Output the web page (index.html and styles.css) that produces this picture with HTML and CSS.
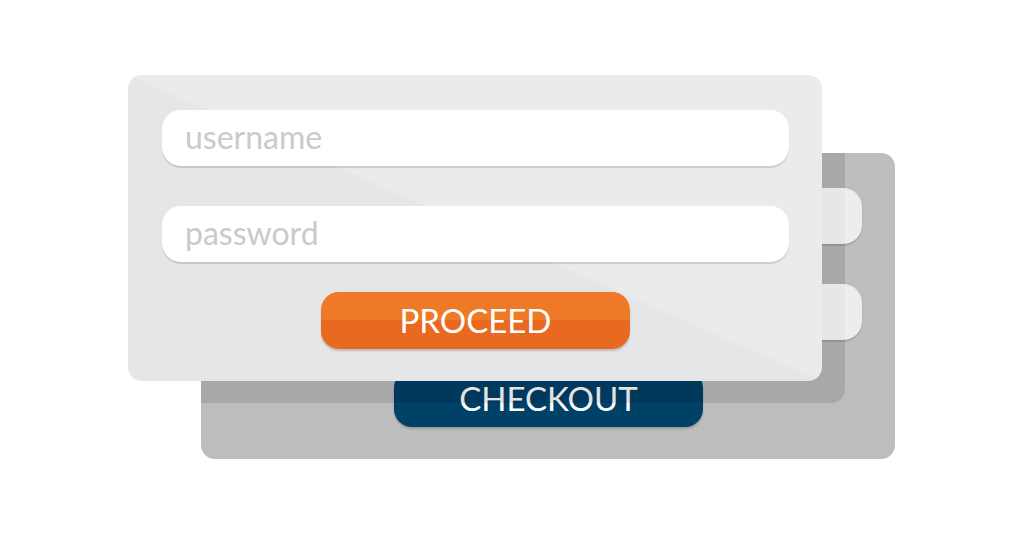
FILE: index.html
```html
<!DOCTYPE html>
<html lang="en">
<head>
<meta charset="utf-8">
<title>Login</title>
<link rel="stylesheet" href="styles.css">
</head>
<body>
<div class="stage">
  <div class="card card-back">
    <div class="field field-back"></div>
    <div class="field field-back"></div>
    <div class="btn btn-checkout">CHECKOUT</div>
  </div>
  <div class="card card-front">
    <div class="field"><span class="ph">username</span></div>
    <div class="field"><span class="ph">password</span></div>
    <div class="btn btn-proceed">PROCEED</div>
  </div>
</div>
</body>
</html>
```

FILE: styles.css
```css
* { box-sizing: border-box; }
html, body {
  margin: 0;
  background: #ffffff;
  font-family: Lato, "Liberation Sans", sans-serif;
}
.stage {
  display: grid;
  padding: 75px 0 0 128px;
  width: 1024px;
  height: 535px;
}
.card {
  grid-area: 1 / 1;
  width: 694px;
  height: 306px;
  border-radius: 14px;
  display: flex;
  flex-direction: column;
  align-items: center;
  padding: 35px 33px 0 34px;
}
.card-back {
  margin: 78px 0 0 73px;
  background: #bcbdbf;
  position: relative;
  z-index: 0;
  overflow: hidden;
}
.card-back::before {
  content: "";
  position: absolute;
  left: 0;
  top: 0;
  width: 644px;
  height: 250px;
  border-bottom-right-radius: 14px;
  background: rgba(0, 0, 0, 0.11);
  z-index: 1;
}
.card-front {
  position: relative;
  z-index: 1;
  background: linear-gradient(to top right, #e5e6e7 50%, #eaebeb 50%);
}
.field {
  width: 627px;
  height: 56px;
  flex: none;
  border-radius: 19px;
  background: #ffffff;
  box-shadow: 0 2px 1px rgba(0, 0, 0, 0.13);
  display: flex;
  align-items: center;
  padding-left: 23px;
}
.field + .field { margin-top: 40px; }
.field-back {
  background: rgba(255, 255, 255, 0.73);
  position: relative;
  z-index: 2;
}
.ph {
  font-size: 32px;
  color: #c9cacb;
  line-height: 1;
  padding-bottom: 2px;
}
.btn {
  margin-top: 30px;
  width: 309px;
  height: 57px;
  flex: none;
  border-radius: 18px;
  display: flex;
  align-items: center;
  justify-content: center;
  color: #ffffff;
  font-size: 33px;
  line-height: 1;
  padding-bottom: 1px;
  box-shadow: 0 2px 2px rgba(0, 0, 0, 0.18);
}
.btn-proceed {
  background: linear-gradient(#ee7a28 50%, #e8691f 50%);
}
.btn-checkout {
  background: #004168;
  position: relative;
  z-index: 0;
}
```
